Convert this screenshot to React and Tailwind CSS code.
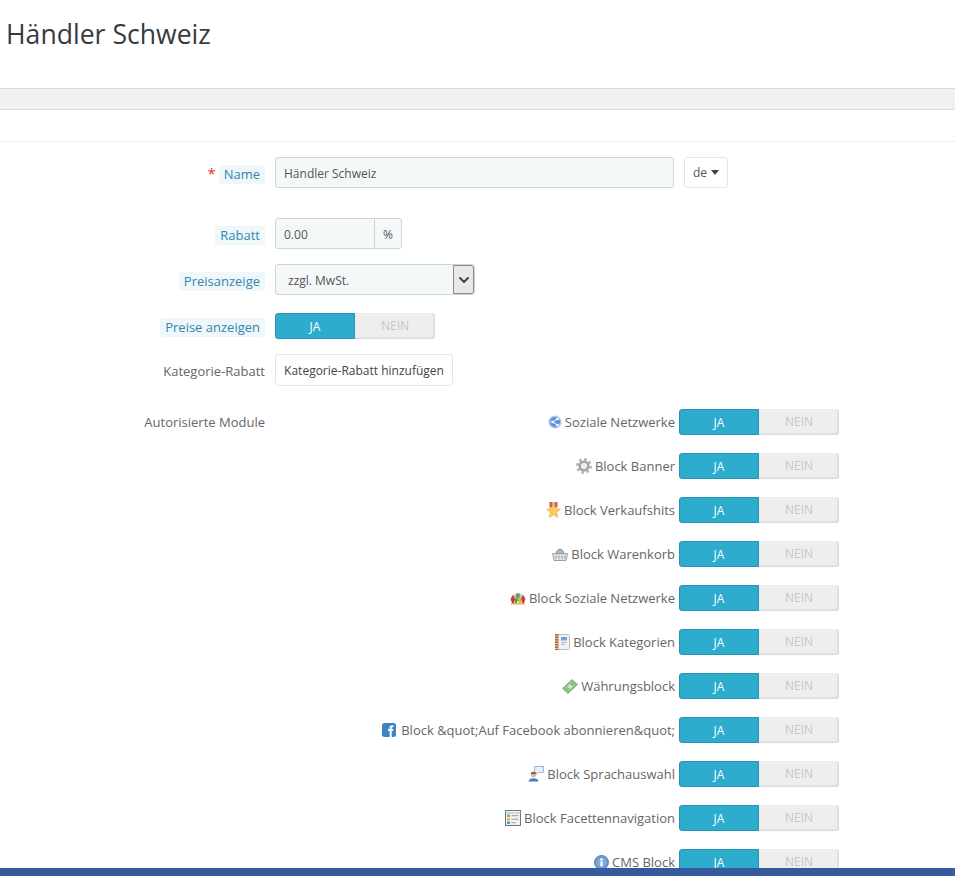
import { ChevronDown } from "lucide-react";

const ShareIcon = () => (
  <svg width="14" height="14" viewBox="0 0 14 14">
    <circle cx="7" cy="7" r="6.5" fill="#a9c9ec" />
    <circle cx="7" cy="7" r="5" fill="#5b93d8" />
    <path d="M9.5 4 L4.5 7 L9.5 10" stroke="#fff" strokeWidth="1" fill="none" />
    <circle cx="9.5" cy="4" r="1.3" fill="#fff" />
    <circle cx="4.5" cy="7" r="1.3" fill="#fff" />
    <circle cx="9.5" cy="10" r="1.3" fill="#fff" />
  </svg>
);

const GearIcon = () => (
  <svg width="16" height="16" viewBox="0 0 16 16">
    <circle cx="8" cy="8" r="6.6" fill="none" stroke="#b4b4b4" strokeWidth="2.6" strokeDasharray="2.6 2.58" />
    <circle cx="8" cy="8" r="4.3" fill="none" stroke="#a4a4a4" strokeWidth="2.6" />
    <circle cx="8" cy="8" r="2.2" fill="#ececec" />
  </svg>
);

const StarIcon = () => (
  <svg width="15" height="16" viewBox="0 0 15 16">
    <path d="M3.5 0H11.5V5.5H3.5Z" fill="#dd5a50" />
    <path d="M6 0H9V5H6Z" fill="#a9c98c" />
    <path d="M7.5 2.5L9.4 6.6L14.5 7.2L10.7 10.3L11.8 15.5L7.5 12.8L3.2 15.5L4.3 10.3L0.5 7.2L5.6 6.6Z" fill="#f9cb62" stroke="#eda63f" strokeWidth="0.6" />
  </svg>
);

const BasketIcon = () => (
  <svg width="16" height="14" viewBox="0 0 16 14">
    <path d="M4.5 6C4.5 1 11.5 1 11.5 6" fill="#9dbdd2" stroke="#6f94ad" />
    <path d="M0.5 6.5H15.5L14 13.5H2Z" fill="#ececec" stroke="#8a8a8a" strokeWidth="0.8" />
    <path d="M4 7V13M7 7V13M10 7V13M13 7V13M1.5 10H14.5" stroke="#a0a0a0" strokeWidth="0.7" />
  </svg>
);

const CrownIcon = () => (
  <svg width="16" height="14" viewBox="0 0 16 14">
    <circle cx="8" cy="6" r="4.2" fill="#a9cbdc" />
    <path d="M6 4L8 2L10 4L9 7H7Z" fill="#6b9a3e" />
    <path d="M0.5 8L3 3.5L5 8L4 12H2Z" fill="#c2402f" />
    <path d="M11 8L13 3.5L15.5 8L14 12H12Z" fill="#c8402f" />
    <path d="M4.5 9L6.5 6L8 9L6.5 12.5H5Z" fill="#5a9b3c" />
    <path d="M8 9L9.5 6L11.5 9L10.5 12.5H9Z" fill="#e6b032" />
    <path d="M1 12.8H15" stroke="#d9ae45" strokeWidth="1.4" />
  </svg>
);

const BookIcon = () => (
  <svg width="15" height="16" viewBox="0 0 15 16">
    <rect x="0.5" y="0.5" width="14" height="15" rx="1" fill="#f2f2f2" stroke="#bcbcbc" />
    <rect x="0" y="0" width="3.5" height="16" fill="#b5653a" />
    <path d="M0 2H3.5M0 4.5H3.5M0 7H3.5M0 9.5H3.5M0 12H3.5M0 14.5H3.5" stroke="#f2dccb" strokeWidth="0.8" />
    <rect x="6" y="3" width="6" height="3.5" fill="#7aa3d4" />
    <path d="M6 8.5H12M6 10.5H10" stroke="#a7bfdc" />
  </svg>
);

const MoneyIcon = () => (
  <svg width="16" height="15" viewBox="0 0 16 15">
    <path d="M0.5 9.5L10 0.5L15.5 5.5L6 14.5Z" fill="#86c281" stroke="#66a663" strokeWidth="0.7" />
    <circle cx="8" cy="7.5" r="2" fill="#d5ebcd" />
    <path d="M3 9.5L9.5 3.2M12.5 5.5L6 11.8" stroke="#bddfb4" strokeWidth="0.7" />
  </svg>
);

const FacebookIcon = () => (
  <svg width="14" height="14" viewBox="0 0 14 14" className="mr-[2px]">
    <rect width="14" height="14" rx="2.5" fill="#3d83c6" />
    <path d="M7.6 14V8H6V5.9H7.6V4.6C7.6 3 8.6 2.2 10 2.2H11.4V4.2H10.4C9.8 4.2 9.7 4.5 9.7 5V5.9H11.4L11.1 8H9.7V14Z" fill="#fff" />
  </svg>
);

const SpeechIcon = () => (
  <svg width="16" height="16" viewBox="0 0 16 16">
    <path d="M6.5 0.5H15.5V6.5H10L8 8.5V6.5H6.5Z" fill="#e8f1fa" stroke="#7da6cf" strokeWidth="0.8" />
    <circle cx="5.5" cy="8.5" r="2.8" fill="#e9b48a" />
    <path d="M2.8 8C2.8 5 8 5 8 8Z" fill="#8a5a35" />
    <path d="M0.5 15.5C0.5 11 10.5 11 10.5 15.5Z" fill="#3f7fc4" />
  </svg>
);

const ListIcon = () => (
  <svg width="16" height="16" viewBox="0 0 16 16">
    <rect x="0.5" y="0.5" width="15" height="15" fill="#f3f3ea" stroke="#5d7a99" />
    <path d="M0.5 3H15.5" stroke="#a9b9c9" />
    <rect x="2" y="4.5" width="3" height="2.5" fill="#8cb85c" />
    <rect x="2" y="8" width="3" height="2.5" fill="#e5b445" />
    <rect x="2" y="11.5" width="3" height="2.5" fill="#5f9bd0" />
    <path d="M6.5 5.7H13.5M6.5 9.2H13.5M6.5 12.7H11" stroke="#9a9a9a" />
  </svg>
);

const InfoIcon = () => (
  <svg width="15" height="15" viewBox="0 0 15 15">
    <circle cx="7.5" cy="7.5" r="7" fill="#6f97c9" stroke="#47709f" strokeWidth="0.8" />
    <circle cx="7.5" cy="7.5" r="5" fill="#83a8d6" />
    <rect x="6.4" y="6.3" width="2.2" height="5" fill="#fff" />
    <circle cx="7.5" cy="4.4" r="1.2" fill="#fff" />
  </svg>
);

const MODULES = [
  { label: "Soziale Netzwerke", icon: <ShareIcon /> },
  { label: "Block Banner", icon: <GearIcon /> },
  { label: "Block Verkaufshits", icon: <StarIcon /> },
  { label: "Block Warenkorb", icon: <BasketIcon /> },
  { label: "Block Soziale Netzwerke", icon: <CrownIcon /> },
  { label: "Block Kategorien", icon: <BookIcon /> },
  { label: "Währungsblock", icon: <MoneyIcon /> },
  { label: "Block &quot;Auf Facebook abonnieren&quot;", icon: <FacebookIcon /> },
  { label: "Block Sprachauswahl", icon: <SpeechIcon /> },
  { label: "Block Facettennavigation", icon: <ListIcon /> },
  { label: "CMS Block", icon: <InfoIcon /> },
];

function Toggle() {
  return (
    <div className="flex h-[26px] w-40 shrink-0 text-xs leading-[26px]">
      <span className="w-20 rounded-l-[3px] border border-[#2593b5] bg-[#2eacce] text-center leading-[25px] text-white">JA</span>
      <span className="w-20 rounded-r-[3px] bg-[#eeeeee] text-center text-[#c7c7c7] shadow-[inset_-1px_-1px_2px_rgba(0,0,0,0.12)]">NEIN</span>
    </div>
  );
}

function FieldLabel({ children, className = "mt-1" }) {
  return <span className={`${className} rounded-[3px] bg-[#eff7fb] px-[5px] leading-[19px] text-[#3586ae]`}>{children}</span>;
}

export default function App() {
  return (
    <div className="relative h-screen overflow-hidden bg-white font-['Open_Sans',sans-serif] text-[13px] text-[#666666]">
      <header className="h-[88px] pl-[6px] pt-[15px]">
        <h1 className="text-[26.6px] leading-[38px] text-[#363a41]">Händler Schweiz</h1>
      </header>
      <div className="h-[22px] border-y border-[#dcdcdc] bg-[#eff1f2]" />
      <div className="h-[32px] border-b border-[#eeeeee]" />

      <form className="pt-[15px]">
        <div className="flex h-[31px] items-center">
          <div className="flex w-[265px] items-center justify-end gap-[3px]">
            <span className="mt-[2px] text-[15px] text-[#e3342f]">*</span>
            <FieldLabel>Name</FieldLabel>
          </div>
          <div className="ml-[10px] flex h-full w-[399px] items-center rounded-[3px] border border-[#c9d7d9] bg-[#f5f8f9] px-2 pt-[2px] text-xs text-[#555555]">Händler Schweiz</div>
          <button type="button" className="ml-[10px] flex h-full w-11 items-center justify-center gap-1 rounded-[3px] border border-[#e4e6e6] bg-white text-xs text-[#555555]">
            de
            <span className="border-x-4 border-t-[5px] border-x-transparent border-t-[#444444]" />
          </button>
        </div>

        <div className="mt-[30px] flex h-[31px] items-center">
          <div className="flex w-[265px] justify-end"><FieldLabel>Rabatt</FieldLabel></div>
          <div className="ml-[10px] flex h-full w-[127px] rounded-[3px] border border-[#c9d7d9] bg-[#f5f8f9] text-xs text-[#555555]">
            <span className="flex w-[98px] items-center px-2 pt-[2px]">0.00</span>
            <span className="flex flex-1 items-center justify-center border-l border-[#c9d7d9] pt-[2px]">%</span>
          </div>
        </div>

        <div className="mt-[15px] flex h-[31px] items-center">
          <div className="flex w-[265px] justify-end"><FieldLabel>Preisanzeige</FieldLabel></div>
          <div className="ml-[10px] flex h-full w-[200px] items-center justify-between rounded-[3px] border border-[#c9d7d9] bg-[#f5f8f9] pl-3 text-xs text-[#555555]">
            <span className="pt-[2px]">zzgl. MwSt.</span>
            <span className="flex h-full w-[21px] items-center justify-center rounded-r-[3px] border border-[#8a8a8a] bg-[#e8e8e8]">
              <ChevronDown size={16} strokeWidth={3} className="text-[#444444]" />
            </span>
          </div>
        </div>

        <div className="mt-[18px] flex h-[26px] items-center">
          <div className="flex w-[265px] justify-end"><FieldLabel className="mt-[2px]">Preise anzeigen</FieldLabel></div>
          <div className="ml-[10px]"><Toggle /></div>
        </div>

        <div className="mt-[15px] flex h-[32px] items-center">
          <div className="w-[265px] pt-[3px] text-right">Kategorie-Rabatt</div>
          <button type="button" className="ml-[10px] h-full w-[178px] rounded-[3px] border border-[#e4e6e6] bg-white pt-[1px] text-xs text-[#444444]">Kategorie-Rabatt hinzufügen</button>
        </div>

        <div className="mt-[23px] flex items-start">
          <div className="w-[265px] text-right leading-[26px]">Autorisierte Module</div>
          <ul className="ml-[10px] flex w-[564px] flex-col gap-[18px]">
            {MODULES.map((m) => (
              <li key={m.label} className="flex h-[26px] items-center justify-end gap-1">
                <span className="flex items-center gap-[3px]">
                  {m.icon}
                  <span className="pt-[1px]">{m.label}</span>
                </span>
                <Toggle />
              </li>
            ))}
          </ul>
        </div>
      </form>

      <div className="fixed inset-x-0 bottom-0 h-2 bg-[#365a9e]" />
    </div>
  );
}
